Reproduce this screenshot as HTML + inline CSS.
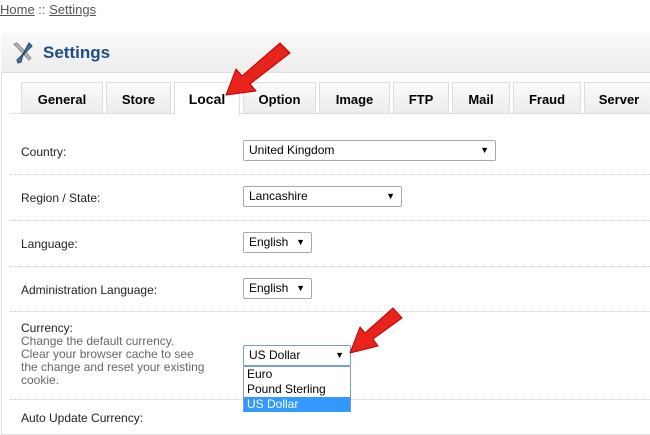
<!DOCTYPE html>
<html><head><style>
body{margin:0;width:650px;height:425px;overflow:hidden;background:#fff;font-family:"Liberation Sans",Arial,sans-serif;position:relative}
.a{position:absolute}
.bc{left:0;top:2px;font-size:13px;color:#666}
.bc u{color:#555}
.panel{left:1px;top:33px;width:660px;height:400px;border:1px solid #ddd;border-radius:5px 0 0 0}
.hd{left:1px;top:33px;width:660px;height:39px;background:linear-gradient(#fafafa,#ececec);border-bottom:1px solid #ddd;border-radius:5px 0 0 0}
.hd span{position:absolute;left:42px;top:10px;font-size:17px;font-weight:bold;color:#1f4d87}
.tab{top:82px;height:31px;background:linear-gradient(#fbfbfb,#ececec);border:1px solid #ddd;border-bottom:none;font-size:13px;font-weight:bold;color:#000;text-align:center;line-height:33px;box-sizing:border-box}
.tab.on{background:#fff;height:33px;font-size:14px}
.line{left:10px;width:650px;height:1px;background:#ddd}
.dot{left:10px;width:650px;border-top:1px dotted #ccc}
.lb{left:21px;font-size:12px;color:#222}
.sel{height:21px;border:1px solid #a9a9a9;border-radius:2px;box-sizing:border-box;font-size:12px;line-height:19px;padding-left:5px;color:#000;background:#fff}
.sel:after{content:"▼";position:absolute;right:6px;top:0;font-size:9px}
</style></head><body>
<div class="a bc"><u>Home</u> :: <u>Settings</u></div>
<div class="a panel"></div>
<div class="a hd"><span>Settings</span>
<svg style="position:absolute;left:10px;top:7px" width="24" height="24" viewBox="0 0 24 24"><path d="M3 4l3-1 14 15-2 2z" fill="#bbb" stroke="#888"/><path d="M18 3l3 3-9 9-2 7-3 1-1-3 6-6z" fill="#3a78b8" stroke="#245"/></svg></div>
<div class="a line" style="top:113px"></div>
<div class="a tab" style="left:21px;width:82px">General</div>
<div class="a tab" style="left:106px;width:65px">Store</div>
<div class="a tab on" style="left:174px;width:66px">Local</div>
<div class="a tab" style="left:243px;width:73px">Option</div>
<div class="a tab" style="left:319px;width:71px">Image</div>
<div class="a tab" style="left:393px;width:56px">FTP</div>
<div class="a tab" style="left:452px;width:58px">Mail</div>
<div class="a tab" style="left:513px;width:68px">Fraud</div>
<div class="a tab" style="left:584px;width:70px">Server</div>
<div class="a dot" style="top:174px"></div>
<div class="a dot" style="top:220px"></div>
<div class="a dot" style="top:266px"></div>
<div class="a dot" style="top:311px"></div>
<div class="a dot" style="top:399px"></div>
<div class="a lb" style="top:145px">Country:</div>
<div class="a lb" style="top:191px">Region / State:</div>
<div class="a lb" style="top:237px">Language:</div>
<div class="a lb" style="top:283px">Administration Language:</div>
<div class="a lb" style="top:322px;line-height:13px">Currency:<br><span style="color:#666">Change the default currency.<br>Clear your browser cache to see<br>the change and reset your existing<br>cookie.</span></div>
<div class="a lb" style="top:411px">Auto Update Currency:</div>
<div class="a sel" style="left:243px;top:140px;width:253px">United Kingdom</div>
<div class="a sel" style="left:243px;top:186px;width:159px">Lancashire</div>
<div class="a sel" style="left:243px;top:232px;width:69px">English</div>
<div class="a sel" style="left:243px;top:278px;width:69px">English</div>
<div class="a sel" style="left:243px;top:345px;width:108px;border-color:#7a9cd3">US Dollar</div>
<div class="a" style="left:243px;top:366px;width:108px;height:46px;border:1px solid #7a9cd3;box-sizing:border-box;font-size:12px;line-height:15px;background:#fff">
<div style="padding-left:3px">Euro</div><div style="padding-left:3px">Pound Sterling</div><div style="padding-left:3px;background:#3399ff;color:#fff">US Dollar</div></div>
<svg class="a" style="left:0;top:0" width="650" height="425">
<g fill="#e8231c" stroke="#b00" stroke-width="1" stroke-linejoin="round">
<path d="M280 43 L290 53 L250 84 L256 91 L226 95 L236 69 L242 76 Z"/>
<path d="M393 308 L402 318 L373 339 L378 346 L350 353 L360 327 L365 333 Z"/>
</g></svg>
</body></html>
